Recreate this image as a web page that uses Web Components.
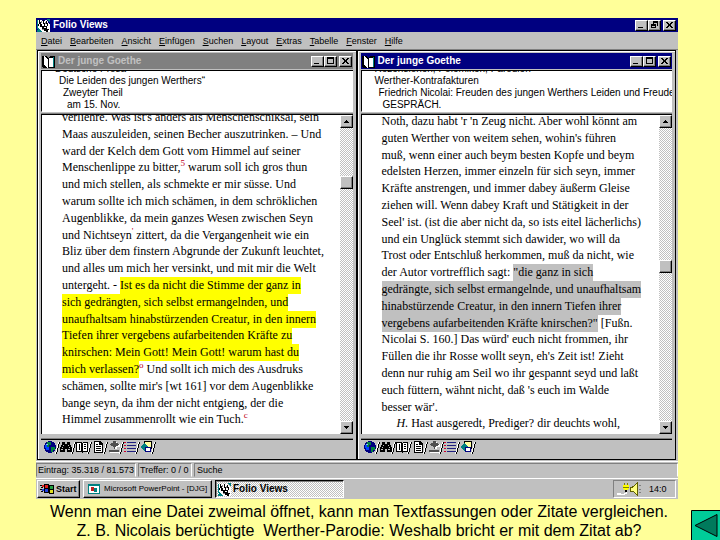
<!DOCTYPE html>
<html lang="de">
<head>
<meta charset="utf-8">
<title>Folio Views</title>
<style>
  html, body { margin: 0; background: #ffff99; }
  body { font-family: "Liberation Sans", Arial, sans-serif; color: #000; }
</style>
</head>
<body>
<slide-page>
  <app-window heading="Folio Views">
    <menu-bar slot="menu" items="Datei,Bearbeiten,Ansicht,Einfügen,Suchen,Layout,Extras,Tabelle,Fenster,Hilfe"></menu-bar>
    <doc-window heading="Der junge Goethe" thumb="17">
      <ref-line slot="ref" level="0">Deutsche Prosa</ref-line>
      <ref-line slot="ref" level="1">Die Leiden des jungen Werthers“</ref-line>
      <ref-line slot="ref" level="2">Zweyter Theil</ref-line>
      <ref-line slot="ref" level="3">am 15. Nov.</ref-line>
      <text-line>verliehre. Was ist's anders als Menschenschiksal, sein</text-line>
      <text-line>Maas auszuleiden, seinen Becher auszutrinken. – Und</text-line>
      <text-line>ward der Kelch dem Gott vom Himmel auf seiner</text-line>
      <text-line>Menschenlippe zu bitter,<sup>5</sup> warum soll ich gros thun</text-line>
      <text-line>und mich stellen, als schmekte er mir süsse. Und</text-line>
      <text-line>warum sollte ich mich schämen, in dem schröklichen</text-line>
      <text-line>Augenblikke, da mein ganzes Wesen zwischen Seyn</text-line>
      <text-line>und Nichtseyn<sup>'</sup> zittert, da die Vergangenheit wie ein</text-line>
      <text-line>Bliz über dem finstern Abgrunde der Zukunft leuchtet,</text-line>
      <text-line>und alles um mich her versinkt, und mit mir die Welt</text-line>
      <text-line>untergeht. - <mark>Ist es da nicht die Stimme der ganz in</mark></text-line>
      <text-line><mark>sich gedrängten, sich selbst ermangelnden, und</mark></text-line>
      <text-line><mark>unaufhaltsam hinabstürzenden Creatur, in den innern</mark></text-line>
      <text-line><mark>Tiefen ihrer vergebens aufarbeitenden Kräfte zu</mark></text-line>
      <text-line><mark>knirschen: Mein Gott! Mein Gott! warum hast du</mark></text-line>
      <text-line><mark>mich verlassen?</mark><sup>o</sup> Und sollt ich mich des Ausdruks</text-line>
      <text-line>schämen, sollte mir's [wt 161] vor dem Augenblikke</text-line>
      <text-line>bange seyn, da ihm der nicht entgieng, der die</text-line>
      <text-line>Himmel zusammenrollt wie ein Tuch.<sup>c</sup></text-line>
    </doc-window>
    <doc-window heading="Der junge Goethe" thumb="47" active>
      <ref-line slot="ref" level="0">Rezensionen, Polemiken, Parodien</ref-line>
      <ref-line slot="ref" level="0">Werther-Kontrafakturen</ref-line>
      <ref-line slot="ref" level="1">Friedrich Nicolai: Freuden des jungen Werthers Leiden und Freude</ref-line>
      <ref-line slot="ref" level="2">GESPRÄCH.</ref-line>
      <text-line>Noth, dazu habt 'r 'n Zeug nicht. Aber wohl könnt am</text-line>
      <text-line>guten Werther von weitem sehen, wohin's führen</text-line>
      <text-line>muß, wenn einer auch beym besten Kopfe und beym</text-line>
      <text-line>edelsten Herzen, immer einzeln für sich seyn, immer</text-line>
      <text-line>Kräfte anstrengen, und immer dabey äußerm Gleise</text-line>
      <text-line>ziehen will. Wenn dabey Kraft und Stätigkeit in der</text-line>
      <text-line>Seel' ist. (ist die aber nicht da, so ists eitel lächerlichs)</text-line>
      <text-line>und ein Unglück stemmt sich dawider, wo will da</text-line>
      <text-line>Trost oder Entschluß herkommen, muß da nicht, wie</text-line>
      <text-line>der Autor vortrefflich sagt: <mark>"die ganz in sich</mark></text-line>
      <text-line><mark>gedrängte, sich selbst ermangelnde, und unaufhaltsam</mark></text-line>
      <text-line><mark>hinabstürzende Creatur, in den innern Tiefen ihrer</mark></text-line>
      <text-line><mark>vergebens aufarbeitenden Kräfte knirschen?"</mark> [Fußn.</text-line>
      <text-line>Nicolai S. 160.] Das würd' euch nicht frommen, ihr</text-line>
      <text-line>Füllen die ihr Rosse wollt seyn, eh's Zeit ist! Zieht</text-line>
      <text-line>denn nur ruhig am Seil wo ihr gespannt seyd und laßt</text-line>
      <text-line>euch füttern, wähnt nicht, daß 's euch im Walde</text-line>
      <text-line>besser wär'.</text-line>
      <text-line indent><em>H.</em> Hast ausgeredt, Prediger? dir deuchts wohl,</text-line>
    </doc-window>
    <status-bar slot="status"></status-bar>
    <task-bar slot="tasks"></task-bar>
  </app-window>
  <slide-caption slot="foot">
    <span>Wenn man eine Datei zweimal öffnet, kann man Textfassungen oder Zitate vergleichen.</span>
    <span>Z. B. Nicolais berüchtigte&nbsp; Werther-Parodie: Weshalb bricht er mit dem Zitat ab?</span>
  </slide-caption>
  <back-button slot="foot"></back-button>
</slide-page>

<script>
const FACE = `
  button { font: inherit; color: inherit; margin: 0; padding: 0; background: #c0c0c0; border: 1px solid;
    border-color: #fff #000 #000 #fff; border-radius: 0; box-shadow: inset -1px -1px #808080; }
  svg { display: block; flex: none; shape-rendering: crispEdges; }
`;
const DITHER = `background: repeating-conic-gradient(#c0c0c0 0 25%, #fff 0 50%) 0 0 / 2px 2px;`;

function define(name, render) {
  customElements.define(name, class extends HTMLElement {
    constructor() { super(); this.attachShadow({ mode: 'open' }); }
    connectedCallback() { this.shadowRoot.innerHTML = render(this); }
  });
}

define('slide-page', () => `
  <style>
    :host { display: flex; flex-direction: column; min-height: 100vh; }
    .body { flex: 1; display: flex; padding: 18px 42px 0 36px; }
    ::slotted(app-window) { flex: 1; min-width: 0; }
    footer { display: grid; grid-template-columns: 1fr 29px; align-items: end; }
  </style>
  <div class="body"><slot></slot></div>
  <footer><slot name="foot"></slot></footer>`);

define('win-controls', el => {
  const s = d => `<svg width="9" height="8" viewBox="0 0 9 8" fill="#000">${d}</svg>`;
  const mid = el.hasAttribute('restore')
    ? s('<path fill-rule="evenodd" d="M3 0h5v5H7V2H4v1H3zM1 3h5v4H1zM2 5v1h3V5z"/>')
    : s('<path fill-rule="evenodd" d="M1 0h7v7H1zM2 2v4h5V2z"/>');
  return `
  <style>${FACE}
    :host { display: flex; }
    button { width: 13px; height: 11px; display: grid; place-items: center; }
    button:last-child { margin-left: 2px; }
  </style>
  <button aria-label="Minimieren">${s('<path d="M1 6h5v1H1z"/>')}</button>
  <button aria-label="Maximieren">${mid}</button>
  <button aria-label="Schließen">${s('<path d="M1 1h2v1h1v1h1V2h1V1h2v1H7v1H6v2h1v1h1v1H6V6H5V5H4v1H3v1H1V6h1V5h1V3H2V2H1z"/>')}</button>`;
});

const FOLIO = `<svg width="13" height="13" viewBox="0 0 13 13"><path fill="#fff" d="M1 1h3l2 2 2-2h2l3 5v7H6L1 9z"/><path fill="#008080" d="M0 1h1v9H0zM1 9l4 4H0zM9 0l4 4V0z"/><path d="M2 1h1v2h1v2h1v2h2v2h2v2h2v2H9v-1H7v-2H5V8H3V5H2zM6 1h1v3h1v3h2v3h2v1H9V8H7V5H6zM9 2h1v2h1v3h-1V5H9zM1 5h1v2H1z"/><path fill="#808080" d="M4 2h1v2H4zM8 3h1v2H8zM5 10h2v1H5z"/></svg>`;

define('app-window', el => `
  <style>
    :host { display: flex; flex-direction: column; background: #c0c0c0; }
    header { display: flex; align-items: center; gap: 3px; height: 14px; padding: 0 2px 0 1px; background: #000080; color: #fff; }
    h1 { flex: 1; margin: 0; font: bold 10px/14px "Liberation Sans", sans-serif; }
    svg { display: block; shape-rendering: crispEdges; }
    main { flex: 1; display: grid; grid-template-columns: minmax(0, 1fr) minmax(0, 1fr);
      padding: 0 2px 0 1px; border-top: 1px solid #808080; }
    ::slotted(doc-window) { min-width: 0; }
  </style>
  <header>${FOLIO}<h1>${el.getAttribute('heading')}</h1><win-controls restore></win-controls></header>
  <slot name="menu"></slot>
  <main><slot></slot></main>
  <slot name="status"></slot>
  <slot name="tasks"></slot>`);

define('menu-bar', el => `
  <style>
    :host { display: block; }
    nav { display: flex; gap: 8px; padding: 0 5px; height: 17px; font-size: 9px; line-height: 18px; }
    button { all: unset; white-space: nowrap; }
  </style>
  <nav>${el.getAttribute('items').split(',').map(t => `<button><u>${t[0]}</u>${t.slice(1)}</button>`).join('')}</nav>`);

define('doc-window', el => {
  const on = el.hasAttribute('active');
  return `
  <style>
    :host { display: flex; flex-direction: column; padding: 2px 3px 0; background: #c0c0c0;
      border: 1px solid #000; box-shadow: inset 1px 1px #fff; }
    header { display: flex; align-items: center; gap: 3px; height: 16px; padding: 0 1px;
      background: ${on ? '#000080' : '#808080'}; color: ${on ? '#fff' : '#c0c0c0'}; }
    h2 { flex: 1; margin: 0; font: bold 10px/16px "Liberation Sans", sans-serif; }
    header svg { display: block; shape-rendering: crispEdges; }
    .refs { height: 40px; margin-top: 1px; display: flex; flex-direction: column; justify-content: flex-end;
      overflow: hidden; background: #fff; border-top: 1px solid #000; border-left: 1px solid #000; border-bottom: 1px solid #fff; }
    .pane { flex: 1; display: flex; margin-top: 2px; overflow: hidden; background: #fff;
      border-top: 1px solid #000; border-left: 1px solid #000; box-shadow: 0 -1px #808080; }
    .text { flex: 1; min-width: 0; display: flex; flex-direction: column; padding-left: 20px;
      margin: ${on ? '-2px 0 2px' : '-6px 0 6px'};
      --mark: ${on ? '#c0c0c0' : '#ffff00'};
      font-family: "Liberation Serif", "Times New Roman", serif; font-size: 12px; }
  </style>
  <header>
    <svg width="13" height="13" viewBox="0 0 13 13"><path fill="#000" d="M0 1h4l2 2 2-2h5v12H1L0 11z"/><path fill="#fff" d="M2 1l4 3v9L2 10zM7 3h5v9H7z"/><path fill="#008080" d="M11 2h1v10h-1z"/></svg>
    <h2>${el.getAttribute('heading')}</h2><win-controls></win-controls>
  </header>
  <div class="refs"><slot name="ref"></slot></div>
  <div class="pane"><div class="text"><slot></slot></div><scroll-bar at="${el.getAttribute('thumb')}"></scroll-bar></div>
  <tab-strip></tab-strip>`;
});

define('ref-line', el => `
  <style>
    :host { display: block; flex: none; padding-left: ${13 + 4 * el.getAttribute('level')}px; white-space: nowrap;
      font-size: 10px; line-height: 12px; }
  </style><slot></slot>`);

define('text-line', el => `
  <style>
    :host { display: block; flex: 1; min-height: 0; white-space: nowrap; line-height: 16px;
      padding-left: ${el.hasAttribute('indent') ? 15 : 0}px; }
    ::slotted(mark) { display: inline-block; background: var(--mark); color: inherit; box-shadow: 0 1px var(--mark); }
    ::slotted(sup) { font-size: 9px; line-height: 1; color: #c00020; }
  </style><slot></slot>`);

define('scroll-bar', el => {
  const at = +el.getAttribute('at');
  return `
  <style>${FACE}
    :host { display: flex; flex-direction: column; width: 13px; }
    button { flex: none; height: 13px; display: grid; place-items: center; }
    .track { flex: 1; display: flex; flex-direction: column; ${DITHER} }
    .a { flex: ${at}; } .b { flex: ${100 - at}; }
  </style>
  <button aria-label="Nach oben"><svg width="5" height="3"><path d="M2 0h1v1h1v1h1v1H0V2h1V1h1z"/></svg></button>
  <div class="track"><i class="a"></i><button aria-label="Bildlauffeld"></button><i class="b"></i></div>
  <button aria-label="Nach unten"><svg width="5" height="3"><path d="M0 0h5v1H4v1H3v1H2V2H1V1H0z"/></svg></button>`;
});

const TABS = [
  ['Alles', '<circle cx="6" cy="6" r="6" fill="#000080"/><path fill="#0040ff" d="M1 4h4v5H2z"/><path fill="#008040" d="M3 1h4v3H5v2H3zM7 6h4v3H9v2H7z"/><path fill="#80c0ff" d="M2 3h2v1H2z"/>'],
  ['Suchen', '<path d="M2 1h3v2h2V1h3v2l2 4v4H7V8H5v3H0V7l2-4z"/><path fill="#c0c0c0" d="M3 4h1v1H3zM8 4h1v1H8zM1 8h2v1H1zM8 8h2v1H8zM2 6h1v1H2zM9 6h1v1H9z"/>'],
  ['Dokument', '<path d="M0 1h5l1 1 1-1h5v10H7l-1 1-1-1H0z"/><path fill="#fff" d="M1 2h4v8H1zM7 2h4v8H7z"/><path fill="#000" d="M8 3h2v1H8zM8 5h2v1H8zM8 7h2v1H8zM3 3h1v6H3z"/>'],
  ['Seite', '<path d="M2 0h6l3 3v9H2z"/><path fill="#fff" d="M3 1h4v3h3v7H3z"/><path d="M4 3h2v1H4zM4 5h5v1H4zM4 7h5v1H4zM4 9h5v1H4z"/>'],
  ['Inhalt', '<path fill="#fff" d="M6 1h3v2h3v3H9v2H7zM2 11h10v1H2z"/><path fill="#505050" d="M5 0h3v2h2v1h1v1h-1v1H8v1H7v2H6V6H5V5H3V4H2V3h1V2h2zM1 9h10v2H1z"/>'],
  ['Treffer', '<path fill="#d00030" d="M0 1h2v1H0zM0 4h2v1H0zM0 7h2v1H0zM0 10h2v1H0z"/><path fill="#202080" d="M3 1h9v1H3zM3 4h9v1H3zM3 7h9v1H3zM3 10h9v1H3z"/>'],
  ['Objekt', '<path d="M4 0h8v8H4z"/><path fill="#ffffa0" d="M5 1h6v6H5z"/><path fill="#008080" d="M0 6l4-4 4 4-4 4z"/><path fill="#000080" d="M5 6h6v5H5z"/><path fill="#fff" d="M6 7h4v3H6z"/>']
];
define('tab-strip', () => `
  <style>
    :host { display: block; margin-top: 5px; height: 19px; border-top: 1px solid #000; box-shadow: 0 -1px #808080; }
    div { display: flex; padding-left: 3px; }
    button { all: unset; display: flex; height: 15px; }
    svg { display: block; shape-rendering: crispEdges; }
  </style>
  <div>${TABS.map(([n, d]) => `<button aria-label="${n}"><svg width="16" height="15" viewBox="0 -1 16 15">${d}<path d="M15.500 1l-3 12" stroke="#000" fill="none"/><path d="M14.500 1l-3 12" stroke="#fff" fill="none"/></svg></button>`).join('')}</div>`);

define('status-bar', () => `
  <style>
    :host { display: flex; gap: 2px; margin-top: 1px; padding: 1px 0; border-top: 1px solid #fff; border-bottom: 1px solid #fff;
      font-size: 9px; line-height: 12px; }
    span { padding: 0 1px; white-space: nowrap; border: 1px solid; border-color: #808080 #fff #c0c0c0 #808080; }
    .n { flex: 0 0 95px; } .h { flex: 0 0 50px; } .s { flex: 1; padding-left: 2px; }
  </style>
  <span class="n">Eintrag: 35.318 / 81.573</span><span class="h">Treffer: 0 / 0</span><span class="s">Suche</span>`);

define('task-bar', () => `
  <style>${FACE}
    :host { display: flex; gap: 3px; padding: 1px 2px 1px 1px; font-size: 9px; line-height: 14px; }
    button { display: flex; align-items: center; gap: 2px; height: 18px; padding: 0 2px; white-space: nowrap; }
    .start { width: 43px; font-weight: bold; }
    .task { width: 129px; }
    .small { font-size: 8px; gap: 4px; padding: 0 4px; }
    .down { ${DITHER} border-color: #000 #fff #fff #000; box-shadow: inset 1px 1px #808080; font: bold 10px/14px "Liberation Sans", sans-serif; }
    .tray { margin-left: auto; box-sizing: border-box; width: 63px; display: flex; align-items: center; gap: 7px; padding: 0 2px;
      border: 1px solid; border-color: #808080 #fff #fff #808080; }
  </style>
  <button class="start"><svg width="14" height="12" viewBox="0 0 14 12"><path d="M4 1h4l1 1h5v9H9L8 10H4zM0 2h2v1H0zM1 4h2v1H1zM0 6h2v1H0zM1 8h2v1H1zM2 3h1v1H2zM2 7h1v1H2z"/><path fill="#e02020" d="M5 2h3v3H5zM2 2h2v2H2z"/><path fill="#20a040" d="M10 3h3v3h-3z"/><path fill="#2040e0" d="M5 6h3v3H5zM2 6h2v2H2z"/><path fill="#e0e020" d="M10 7h3v3h-3z"/></svg>Start</button>
  <button class="task small"><svg width="12" height="12" viewBox="0 0 12 12"><path fill="#008080" d="M0 1h12v10H0z"/><path fill="#fff" d="M1 3h10v7H1z"/><path fill="#c02020" d="M3 4h3v4H3z"/><path fill="#008080" d="M6 5h3v4H6z"/></svg>Microsoft PowerPoint - [DJG]</button>
  <button class="task down">${FOLIO}Folio Views</button>
  <div class="tray"><svg width="26" height="14" viewBox="0 0 26 14"><path fill="#ffff00" d="M7 3h6v3l-1 2H8L7 6z"/><path fill="#808000" d="M8 1h1v2H8zM11 1h1v2h-1zM7 5h6v1H7z"/><path fill="#fff" d="M1 11h4v1h3v-1h2V8h1v4H9v1H1z"/><path d="M9 8h2v2H9z"/><path fill="#ffff80" d="M14 5h2l5-4v12l-5-4h-2z"/><path d="M21.500 1v12l-5-4h-2V5h2z" stroke="#606000" fill="none"/><path d="M23 4l2-1M23 7h2M23 10l2 1" stroke="#808080"/></svg>14:0</div>`);

define('slide-caption', () => `
  <style>
    :host { display: flex; flex-direction: column; align-items: center; padding: 3px 0 0 27px; font-size: 16px; line-height: 19px; white-space: nowrap; }
  </style><slot></slot>`);

define('back-button', () => `
  <style>
    :host { display: block; }
    button { display: block; width: 29px; height: 30px; padding: 0; border: 0; background: none; }
    svg { display: block; }
  </style>
  <button aria-label="Zurück"><svg width="29" height="30" viewBox="0 0 29 30"><path fill="#00cc99" stroke="#000" d="M.5 31V.5H30V31z"/><path fill="#007a5c" stroke="#000" d="M4 15.500L26 4.500v22z"/></svg></button>`);
</script>
</body>
</html>
